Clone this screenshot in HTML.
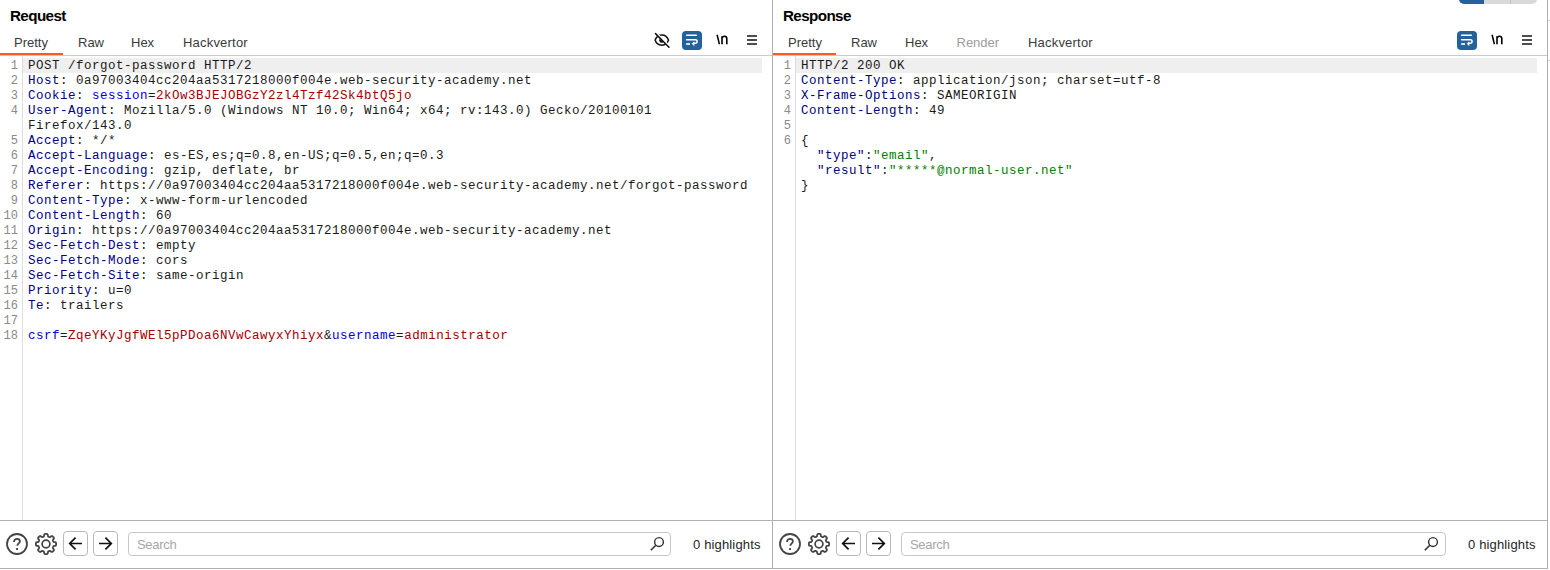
<!DOCTYPE html>
<html><head><meta charset="utf-8">
<style>
*{margin:0;padding:0;box-sizing:border-box}
html,body{width:1550px;height:570px;overflow:hidden;background:#fff}
body{position:relative;font-family:"Liberation Sans",sans-serif;color:#222}
.abs{position:absolute}
.title{position:absolute;top:6px;font-weight:bold;font-size:15.2px;color:#000;line-height:20px;letter-spacing:-0.6px}
.tab{position:absolute;top:34px;font-size:13px;line-height:18px;color:#3a3a3a;white-space:nowrap}
.under{position:absolute;top:53px;height:2px;background:#ff5a1f}
.sep{position:absolute;top:55px;height:1px;background:#c8cccc}
.gutline{position:absolute;top:56px;height:464px;width:1px;background:#ddd}
.hl{position:absolute;top:58px;height:15px;background:#efefef}
.code{position:absolute;top:59px;font-family:"Liberation Mono",monospace;font-size:12.5px;letter-spacing:0.5px;line-height:15px;color:#1a1a1a;white-space:pre}
.nums{position:absolute;top:59px;font-family:"Liberation Mono",monospace;font-size:12px;line-height:15px;color:#8a8a8a;white-space:pre;text-align:right;width:18px}
.n{color:#000080}
.b{color:#0000d0}
.r{color:#a30000}
.g{color:#008000}
.vdiv{position:absolute;top:0;width:1px;background:#b5b0b0}
.hsep{position:absolute;height:1px;background:#b5b0b0}
.btn{position:absolute;top:531px;width:25px;height:25px;border:1px solid #bdb8b8;border-radius:4px}
.search{position:absolute;top:532px;height:24px;border:1px solid #c8c4c4;border-radius:4px}
.ph{position:absolute;top:536px;font-size:13px;line-height:18px;color:#a6a6a6;letter-spacing:-0.3px}
.hcount{position:absolute;top:536px;font-size:13px;line-height:18px;color:#262626;letter-spacing:0.15px}
.wrapbtn{position:absolute;top:31px;width:20px;height:19px;border-radius:4px;background:#24629e}
.nl{position:absolute;top:30px;font-size:14px;line-height:18px;color:#000}
</style></head><body>

<!-- ===== REQUEST ===== -->
<div class="title" style="left:10px">Request</div>
<div class="tab" style="left:14px">Pretty</div>
<div class="tab" style="left:78px">Raw</div>
<div class="tab" style="left:131px">Hex</div>
<div class="tab" style="left:183px;letter-spacing:0.2px">Hackvertor</div>
<div class="sep" style="left:0;width:772px"></div>
<div class="under" style="left:0;width:63px"></div>

<!-- eye slash -->
<svg class="abs" style="left:652px;top:31px" width="20" height="20" viewBox="0 0 20 20">
 <path d="M3.1 9.1 C4.1 6 6.7 3.9 9.9 3.9 C13.1 3.9 15.5 6 16.5 9.1 C15.5 12.2 13.1 14.2 9.9 14.2 C6.7 14.2 4.1 12.2 3.1 9.1 Z" fill="none" stroke="#111" stroke-width="1.5"/>
 <path d="M11.3 11 A2.4 2.4 0 0 1 7.9 7.6 Z" fill="#111"/>
 <path d="M4.3 2.3 L18.3 16.3" stroke="#fff" stroke-width="2.4"/>
 <path d="M3.5 2.6 L17 16.2" stroke="#111" stroke-width="1.5" stroke-linecap="round"/>
</svg>
<!-- wrap -->
<div class="wrapbtn" style="left:682px"></div>
<svg class="abs" style="left:682px;top:31px" width="20" height="19" viewBox="0 0 20 19">
 <path d="M4.6 4.3 H14.3" stroke="#fff" stroke-width="1.5" stroke-linecap="round"/>
 <path d="M4.6 8.8 H13.3 C14.4 8.8 15.1 9.6 15.1 10.5 C15.1 11.5 14.4 12.2 13.3 12.2 H11.8" fill="none" stroke="#fff" stroke-width="1.5" stroke-linecap="round"/>
 <path d="M12 10.9 L10.2 12.6 L12 14.6 Z" fill="#fff" stroke="#fff" stroke-width="0.7" stroke-linejoin="round"/>
 <path d="M4.2 13 H8" stroke="#fff" stroke-width="1.7"/>
</svg>
<svg class="abs" style="left:714px;top:33px" width="16" height="14" viewBox="0 0 16 14"><path d="M3.1 1.8 L5.4 11.3" stroke="#000" stroke-width="1.5"/><path d="M8 11.2 V3.2 M8 5.8 C8 4.2 9.1 3.3 10.5 3.3 C12 3.3 12.8 4.2 12.8 5.8 V11.2" fill="none" stroke="#000" stroke-width="1.6"/></svg>
<!-- hamburger -->
<div class="abs" style="left:747px;top:35px;width:10px;height:2px;background:#4d4d4d"></div>
<div class="abs" style="left:747px;top:39px;width:10px;height:2px;background:#4d4d4d"></div>
<div class="abs" style="left:747px;top:43px;width:10px;height:2px;background:#4d4d4d"></div>

<div class="hl" style="left:23px;width:739px"></div>
<div class="gutline" style="left:22px"></div>
<div class="nums" style="left:0">1
2
3
4

5
6
7
8
9
10
11
12
13
14
15
16
17
18</div>
<div class="code" style="left:28px">POST /forgot-password HTTP/2
<span class="n">Host</span>: 0a97003404cc204aa5317218000f004e.web-security-academy.net
<span class="n">Cookie</span>: <span class="b">session</span>=<span class="r">2kOw3BJEJOBGzY2zl4Tzf42Sk4btQ5jo</span>
<span class="n">User-Agent</span>: Mozilla/5.0 (Windows NT 10.0; Win64; x64; rv:143.0) Gecko/20100101
Firefox/143.0
<span class="n">Accept</span>: */*
<span class="n">Accept-Language</span>: es-ES,es;q=0.8,en-US;q=0.5,en;q=0.3
<span class="n">Accept-Encoding</span>: gzip, deflate, br
<span class="n">Referer</span>: https://0a97003404cc204aa5317218000f004e.web-security-academy.net/forgot-password
<span class="n">Content-Type</span>: x-www-form-urlencoded
<span class="n">Content-Length</span>: 60
<span class="n">Origin</span>: https://0a97003404cc204aa5317218000f004e.web-security-academy.net
<span class="n">Sec-Fetch-Dest</span>: empty
<span class="n">Sec-Fetch-Mode</span>: cors
<span class="n">Sec-Fetch-Site</span>: same-origin
<span class="n">Priority</span>: u=0
<span class="n">Te</span>: trailers

<span class="b">csrf</span>=<span class="r">ZqeYKyJgfWEl5pPDoa6NVwCawyxYhiyx</span>&amp;<span class="b">username</span>=<span class="r">administrator</span></div>

<!-- footer request -->
<div class="hsep" style="left:0;top:520px;width:1548px"></div>
<div class="hsep" style="left:0;top:568px;width:1548px"></div>
<svg class="abs" style="left:5px;top:532px" width="24" height="24" viewBox="0 0 24 24">
 <circle cx="12" cy="12" r="10" fill="none" stroke="#444" stroke-width="1.8"/>
 <path d="M9 9.9 C9 7.9 10.4 6.9 12 6.9 C13.7 6.9 14.9 8 14.9 9.4 C14.9 11.2 12.3 11.6 12.3 13.8" fill="none" stroke="#444" stroke-width="1.8"/>
 <rect x="11.1" y="16.1" width="1.9" height="1.9" fill="#444"/>
</svg>
<svg class="abs" style="left:34px;top:532px" width="24" height="24" viewBox="0 0 24 24">
 <path d="M22.10 12.00 L22.10 12.25 L22.08 12.50 L22.06 12.74 L22.02 12.99 L21.96 13.23 L21.82 13.46 L21.54 13.65 L21.03 13.80 L20.40 13.89 L19.90 13.98 L19.61 14.11 L19.46 14.26 L19.35 14.43 L19.27 14.60 L19.20 14.78 L19.13 14.95 L19.05 15.13 L18.98 15.30 L18.92 15.48 L18.87 15.67 L18.87 15.89 L18.99 16.19 L19.27 16.60 L19.66 17.12 L19.91 17.57 L19.97 17.91 L19.91 18.17 L19.79 18.39 L19.64 18.59 L19.48 18.78 L19.31 18.96 L19.14 19.14 L18.96 19.31 L18.78 19.48 L18.59 19.64 L18.39 19.79 L18.17 19.91 L17.91 19.97 L17.57 19.91 L17.12 19.66 L16.60 19.27 L16.19 18.99 L15.89 18.87 L15.67 18.87 L15.48 18.92 L15.30 18.98 L15.13 19.05 L14.95 19.13 L14.78 19.20 L14.60 19.27 L14.43 19.35 L14.26 19.46 L14.11 19.61 L13.98 19.90 L13.89 20.40 L13.80 21.03 L13.65 21.54 L13.46 21.82 L13.23 21.96 L12.99 22.02 L12.74 22.06 L12.50 22.08 L12.25 22.10 L12.00 22.10 L11.75 22.10 L11.50 22.08 L11.26 22.06 L11.01 22.02 L10.77 21.96 L10.54 21.82 L10.35 21.54 L10.20 21.03 L10.11 20.40 L10.02 19.90 L9.89 19.61 L9.74 19.46 L9.57 19.35 L9.40 19.27 L9.22 19.20 L9.05 19.13 L8.87 19.05 L8.70 18.98 L8.52 18.92 L8.33 18.87 L8.11 18.87 L7.81 18.99 L7.40 19.27 L6.88 19.66 L6.43 19.91 L6.09 19.97 L5.83 19.91 L5.61 19.79 L5.41 19.64 L5.22 19.48 L5.04 19.31 L4.86 19.14 L4.69 18.96 L4.52 18.78 L4.36 18.59 L4.21 18.39 L4.09 18.17 L4.03 17.91 L4.09 17.57 L4.34 17.12 L4.73 16.60 L5.01 16.19 L5.13 15.89 L5.13 15.67 L5.08 15.48 L5.02 15.30 L4.95 15.13 L4.87 14.95 L4.80 14.78 L4.73 14.60 L4.65 14.43 L4.54 14.26 L4.39 14.11 L4.10 13.98 L3.60 13.89 L2.97 13.80 L2.46 13.65 L2.18 13.46 L2.04 13.23 L1.98 12.99 L1.94 12.74 L1.92 12.50 L1.90 12.25 L1.90 12.00 L1.90 11.75 L1.92 11.50 L1.94 11.26 L1.98 11.01 L2.04 10.77 L2.18 10.54 L2.46 10.35 L2.97 10.20 L3.60 10.11 L4.10 10.02 L4.39 9.89 L4.54 9.74 L4.65 9.57 L4.73 9.40 L4.80 9.22 L4.87 9.05 L4.95 8.87 L5.02 8.70 L5.08 8.52 L5.13 8.33 L5.13 8.11 L5.01 7.81 L4.73 7.40 L4.34 6.88 L4.09 6.43 L4.03 6.09 L4.09 5.83 L4.21 5.61 L4.36 5.41 L4.52 5.22 L4.69 5.04 L4.86 4.86 L5.04 4.69 L5.22 4.52 L5.41 4.36 L5.61 4.21 L5.83 4.09 L6.09 4.03 L6.43 4.09 L6.88 4.34 L7.40 4.73 L7.81 5.01 L8.11 5.13 L8.33 5.13 L8.52 5.08 L8.70 5.02 L8.87 4.95 L9.05 4.87 L9.22 4.80 L9.40 4.73 L9.57 4.65 L9.74 4.54 L9.89 4.39 L10.02 4.10 L10.11 3.60 L10.20 2.97 L10.35 2.46 L10.54 2.18 L10.77 2.04 L11.01 1.98 L11.26 1.94 L11.50 1.92 L11.75 1.90 L12.00 1.90 L12.25 1.90 L12.50 1.92 L12.74 1.94 L12.99 1.98 L13.23 2.04 L13.46 2.18 L13.65 2.46 L13.80 2.97 L13.89 3.60 L13.98 4.10 L14.11 4.39 L14.26 4.54 L14.43 4.65 L14.60 4.73 L14.78 4.80 L14.95 4.87 L15.13 4.95 L15.30 5.02 L15.48 5.08 L15.67 5.13 L15.89 5.13 L16.19 5.01 L16.60 4.73 L17.12 4.34 L17.57 4.09 L17.91 4.03 L18.17 4.09 L18.39 4.21 L18.59 4.36 L18.78 4.52 L18.96 4.69 L19.14 4.86 L19.31 5.04 L19.48 5.22 L19.64 5.41 L19.79 5.61 L19.91 5.83 L19.97 6.09 L19.91 6.43 L19.66 6.88 L19.27 7.40 L18.99 7.81 L18.87 8.11 L18.87 8.33 L18.92 8.52 L18.98 8.70 L19.05 8.87 L19.13 9.05 L19.20 9.22 L19.27 9.40 L19.35 9.57 L19.46 9.74 L19.61 9.89 L19.90 10.02 L20.40 10.11 L21.03 10.20 L21.54 10.35 L21.82 10.54 L21.96 10.77 L22.02 11.01 L22.06 11.26 L22.08 11.50 L22.10 11.75 Z" fill="none" stroke="#444" stroke-width="1.8" stroke-linejoin="round"/>
 <circle cx="12" cy="12" r="3.9" fill="none" stroke="#444" stroke-width="1.7"/>
</svg>
<div class="btn" style="left:63px"></div>
<svg class="abs" style="left:63px;top:531px" width="25" height="25" viewBox="0 0 25 25">
 <path d="M19 12.5 H6.8 M12.6 6.6 L6.7 12.5 L12.6 18.4" fill="none" stroke="#111" stroke-width="1.7"/>
</svg>
<div class="btn" style="left:93px"></div>
<svg class="abs" style="left:93px;top:531px" width="25" height="25" viewBox="0 0 25 25">
 <path d="M6 12.5 H18.2 M12.4 6.6 L18.3 12.5 L12.4 18.4" fill="none" stroke="#111" stroke-width="1.7"/>
</svg>
<div class="search" style="left:128px;width:543px"></div>
<div class="ph" style="left:137px">Search</div>
<svg class="abs" style="left:647px;top:535px" width="18" height="18" viewBox="0 0 18 18">
 <circle cx="12" cy="7" r="4.4" fill="none" stroke="#333" stroke-width="1.45"/>
 <path d="M8.8 10.2 L3.8 15.2" stroke="#333" stroke-width="1.6"/>
</svg>
<div class="hcount" style="left:693px">0 highlights</div>

<!-- divider -->
<div class="vdiv" style="left:772px;height:569px"></div>

<!-- ===== RESPONSE ===== -->
<div class="title" style="left:783px">Response</div>
<div class="tab" style="left:788px">Pretty</div>
<div class="tab" style="left:851px">Raw</div>
<div class="tab" style="left:905px">Hex</div>
<div class="tab" style="left:956.6px;color:#9c9c9c;letter-spacing:-0.05px">Render</div>
<div class="tab" style="left:1028px;letter-spacing:0.2px">Hackvertor</div>
<div class="sep" style="left:773px;width:774px"></div>
<div class="under" style="left:773px;width:63px"></div>

<div class="wrapbtn" style="left:1457px"></div>
<svg class="abs" style="left:1457px;top:31px" width="20" height="19" viewBox="0 0 20 19">
 <path d="M4.6 4.3 H14.3" stroke="#fff" stroke-width="1.5" stroke-linecap="round"/>
 <path d="M4.6 8.8 H13.3 C14.4 8.8 15.1 9.6 15.1 10.5 C15.1 11.5 14.4 12.2 13.3 12.2 H11.8" fill="none" stroke="#fff" stroke-width="1.5" stroke-linecap="round"/>
 <path d="M12 10.9 L10.2 12.6 L12 14.6 Z" fill="#fff" stroke="#fff" stroke-width="0.7" stroke-linejoin="round"/>
 <path d="M4.2 13 H8" stroke="#fff" stroke-width="1.7"/>
</svg>
<svg class="abs" style="left:1489px;top:33px" width="16" height="14" viewBox="0 0 16 14"><path d="M3.1 1.8 L5.4 11.3" stroke="#000" stroke-width="1.5"/><path d="M8 11.2 V3.2 M8 5.8 C8 4.2 9.1 3.3 10.5 3.3 C12 3.3 12.8 4.2 12.8 5.8 V11.2" fill="none" stroke="#000" stroke-width="1.6"/></svg>
<div class="abs" style="left:1522px;top:35px;width:10px;height:2px;background:#4d4d4d"></div>
<div class="abs" style="left:1522px;top:39px;width:10px;height:2px;background:#4d4d4d"></div>
<div class="abs" style="left:1522px;top:43px;width:10px;height:2px;background:#4d4d4d"></div>

<div class="hl" style="left:796px;width:741px"></div>
<div class="gutline" style="left:795px"></div>
<div class="nums" style="left:773px">1
2
3
4
5
6</div>
<div class="code" style="left:801px">HTTP/2 200 OK
<span class="n">Content-Type</span>: application/json; charset=utf-8
<span class="n">X-Frame-Options</span>: SAMEORIGIN
<span class="n">Content-Length</span>: 49

{
  <span class="n">"type"</span>:<span class="g">"email"</span>,
  <span class="n">"result"</span>:<span class="g">"*****@normal-user.net"</span>
}</div>

<!-- footer response -->
<svg class="abs" style="left:778px;top:532px" width="24" height="24" viewBox="0 0 24 24">
 <circle cx="12" cy="12" r="10" fill="none" stroke="#444" stroke-width="1.8"/>
 <path d="M9 9.9 C9 7.9 10.4 6.9 12 6.9 C13.7 6.9 14.9 8 14.9 9.4 C14.9 11.2 12.3 11.6 12.3 13.8" fill="none" stroke="#444" stroke-width="1.8"/>
 <rect x="11.1" y="16.1" width="1.9" height="1.9" fill="#444"/>
</svg>
<svg class="abs" style="left:807px;top:532px" width="24" height="24" viewBox="0 0 24 24">
 <path d="M22.10 12.00 L22.10 12.25 L22.08 12.50 L22.06 12.74 L22.02 12.99 L21.96 13.23 L21.82 13.46 L21.54 13.65 L21.03 13.80 L20.40 13.89 L19.90 13.98 L19.61 14.11 L19.46 14.26 L19.35 14.43 L19.27 14.60 L19.20 14.78 L19.13 14.95 L19.05 15.13 L18.98 15.30 L18.92 15.48 L18.87 15.67 L18.87 15.89 L18.99 16.19 L19.27 16.60 L19.66 17.12 L19.91 17.57 L19.97 17.91 L19.91 18.17 L19.79 18.39 L19.64 18.59 L19.48 18.78 L19.31 18.96 L19.14 19.14 L18.96 19.31 L18.78 19.48 L18.59 19.64 L18.39 19.79 L18.17 19.91 L17.91 19.97 L17.57 19.91 L17.12 19.66 L16.60 19.27 L16.19 18.99 L15.89 18.87 L15.67 18.87 L15.48 18.92 L15.30 18.98 L15.13 19.05 L14.95 19.13 L14.78 19.20 L14.60 19.27 L14.43 19.35 L14.26 19.46 L14.11 19.61 L13.98 19.90 L13.89 20.40 L13.80 21.03 L13.65 21.54 L13.46 21.82 L13.23 21.96 L12.99 22.02 L12.74 22.06 L12.50 22.08 L12.25 22.10 L12.00 22.10 L11.75 22.10 L11.50 22.08 L11.26 22.06 L11.01 22.02 L10.77 21.96 L10.54 21.82 L10.35 21.54 L10.20 21.03 L10.11 20.40 L10.02 19.90 L9.89 19.61 L9.74 19.46 L9.57 19.35 L9.40 19.27 L9.22 19.20 L9.05 19.13 L8.87 19.05 L8.70 18.98 L8.52 18.92 L8.33 18.87 L8.11 18.87 L7.81 18.99 L7.40 19.27 L6.88 19.66 L6.43 19.91 L6.09 19.97 L5.83 19.91 L5.61 19.79 L5.41 19.64 L5.22 19.48 L5.04 19.31 L4.86 19.14 L4.69 18.96 L4.52 18.78 L4.36 18.59 L4.21 18.39 L4.09 18.17 L4.03 17.91 L4.09 17.57 L4.34 17.12 L4.73 16.60 L5.01 16.19 L5.13 15.89 L5.13 15.67 L5.08 15.48 L5.02 15.30 L4.95 15.13 L4.87 14.95 L4.80 14.78 L4.73 14.60 L4.65 14.43 L4.54 14.26 L4.39 14.11 L4.10 13.98 L3.60 13.89 L2.97 13.80 L2.46 13.65 L2.18 13.46 L2.04 13.23 L1.98 12.99 L1.94 12.74 L1.92 12.50 L1.90 12.25 L1.90 12.00 L1.90 11.75 L1.92 11.50 L1.94 11.26 L1.98 11.01 L2.04 10.77 L2.18 10.54 L2.46 10.35 L2.97 10.20 L3.60 10.11 L4.10 10.02 L4.39 9.89 L4.54 9.74 L4.65 9.57 L4.73 9.40 L4.80 9.22 L4.87 9.05 L4.95 8.87 L5.02 8.70 L5.08 8.52 L5.13 8.33 L5.13 8.11 L5.01 7.81 L4.73 7.40 L4.34 6.88 L4.09 6.43 L4.03 6.09 L4.09 5.83 L4.21 5.61 L4.36 5.41 L4.52 5.22 L4.69 5.04 L4.86 4.86 L5.04 4.69 L5.22 4.52 L5.41 4.36 L5.61 4.21 L5.83 4.09 L6.09 4.03 L6.43 4.09 L6.88 4.34 L7.40 4.73 L7.81 5.01 L8.11 5.13 L8.33 5.13 L8.52 5.08 L8.70 5.02 L8.87 4.95 L9.05 4.87 L9.22 4.80 L9.40 4.73 L9.57 4.65 L9.74 4.54 L9.89 4.39 L10.02 4.10 L10.11 3.60 L10.20 2.97 L10.35 2.46 L10.54 2.18 L10.77 2.04 L11.01 1.98 L11.26 1.94 L11.50 1.92 L11.75 1.90 L12.00 1.90 L12.25 1.90 L12.50 1.92 L12.74 1.94 L12.99 1.98 L13.23 2.04 L13.46 2.18 L13.65 2.46 L13.80 2.97 L13.89 3.60 L13.98 4.10 L14.11 4.39 L14.26 4.54 L14.43 4.65 L14.60 4.73 L14.78 4.80 L14.95 4.87 L15.13 4.95 L15.30 5.02 L15.48 5.08 L15.67 5.13 L15.89 5.13 L16.19 5.01 L16.60 4.73 L17.12 4.34 L17.57 4.09 L17.91 4.03 L18.17 4.09 L18.39 4.21 L18.59 4.36 L18.78 4.52 L18.96 4.69 L19.14 4.86 L19.31 5.04 L19.48 5.22 L19.64 5.41 L19.79 5.61 L19.91 5.83 L19.97 6.09 L19.91 6.43 L19.66 6.88 L19.27 7.40 L18.99 7.81 L18.87 8.11 L18.87 8.33 L18.92 8.52 L18.98 8.70 L19.05 8.87 L19.13 9.05 L19.20 9.22 L19.27 9.40 L19.35 9.57 L19.46 9.74 L19.61 9.89 L19.90 10.02 L20.40 10.11 L21.03 10.20 L21.54 10.35 L21.82 10.54 L21.96 10.77 L22.02 11.01 L22.06 11.26 L22.08 11.50 L22.10 11.75 Z" fill="none" stroke="#444" stroke-width="1.8" stroke-linejoin="round"/>
 <circle cx="12" cy="12" r="3.9" fill="none" stroke="#444" stroke-width="1.7"/>
</svg>
<div class="btn" style="left:836px"></div>
<svg class="abs" style="left:836px;top:531px" width="25" height="25" viewBox="0 0 25 25">
 <path d="M19 12.5 H6.8 M12.6 6.6 L6.7 12.5 L12.6 18.4" fill="none" stroke="#111" stroke-width="1.7"/>
</svg>
<div class="btn" style="left:866px"></div>
<svg class="abs" style="left:866px;top:531px" width="25" height="25" viewBox="0 0 25 25">
 <path d="M6 12.5 H18.2 M12.4 6.6 L18.3 12.5 L12.4 18.4" fill="none" stroke="#111" stroke-width="1.7"/>
</svg>
<div class="search" style="left:901px;width:545px"></div>
<div class="ph" style="left:910px">Search</div>
<svg class="abs" style="left:1421px;top:535px" width="18" height="18" viewBox="0 0 18 18">
 <circle cx="12" cy="7" r="4.4" fill="none" stroke="#333" stroke-width="1.45"/>
 <path d="M8.8 10.2 L3.8 15.2" stroke="#333" stroke-width="1.6"/>
</svg>
<div class="hcount" style="left:1468px">0 highlights</div>

<!-- right border & segmented control -->
<div class="vdiv" style="left:1547px;height:569px"></div>
<div class="abs" style="left:1548px;top:20px;width:2px;height:1px;background:#ccc"></div>
<div class="abs" style="left:1548px;top:60px;width:2px;height:1px;background:#ccc"></div>
<div class="abs" style="left:1459px;top:-6px;width:78px;height:10px;border-radius:5px;background:#d9d9d9;overflow:hidden">
 <div class="abs" style="left:0;top:0;width:25px;height:10px;background:#24629e"></div>
 <div class="abs" style="left:51px;top:0;width:1px;height:10px;background:#c4c4c4"></div>
</div>

</body></html>
